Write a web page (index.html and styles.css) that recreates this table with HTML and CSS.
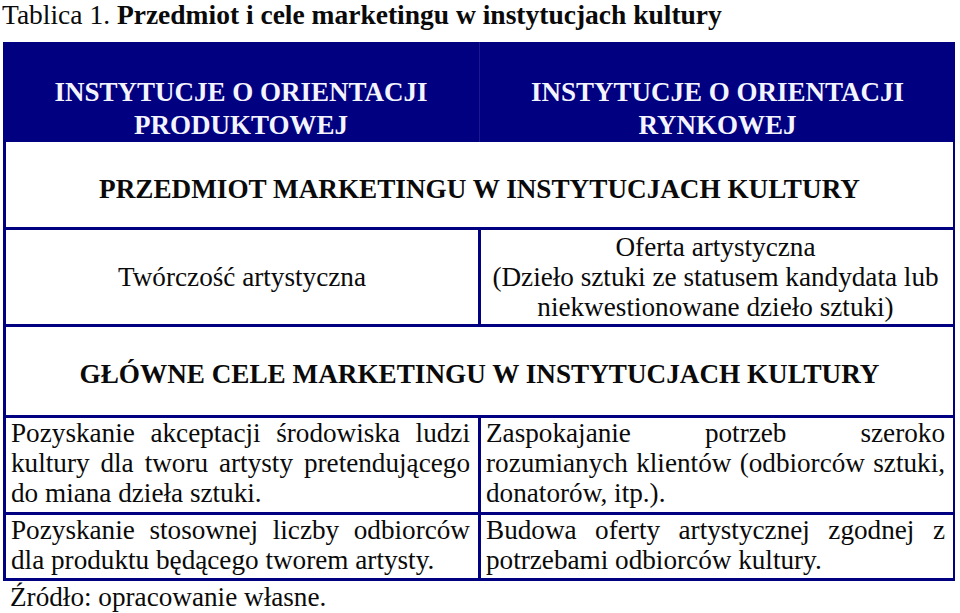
FILE: index.html
```html
<!DOCTYPE html>
<html lang="pl">
<head>
<meta charset="utf-8">
<title>Tablica 1</title>
<link rel="stylesheet" href="styles.css">
</head>
<body>
<div class="title">Tablica 1. <b>Przedmiot i cele marketingu w instytucjach kultury</b></div>
<div class="table">
  <div class="head">
    <div class="hcell">INSTYTUCJE O ORIENTACJI<br>PRODUKTOWEJ</div>
    <div class="hcell hcell-right">INSTYTUCJE O ORIENTACJI<br>RYNKOWEJ</div>
  </div>
  <div class="section section-subject">PRZEDMIOT MARKETINGU W INSTYTUCJACH KULTURY</div>
  <div class="pair pair-subject">
    <div class="cell center">Twórczość artystyczna</div>
    <div class="cell center cell-right">Oferta artystyczna<br>(Dzieło sztuki ze statusem kandydata lub<br>niekwestionowane dzieło sztuki)</div>
  </div>
  <div class="section section-goals">GŁÓWNE CELE MARKETINGU W INSTYTUCJACH KULTURY</div>
  <div class="pair pair-goals1">
    <div class="cell text">
      <span class="ln j">Pozyskanie akceptacji środowiska ludzi</span>
      <span class="ln j">kultury dla tworu artysty pretendującego</span>
      <span class="ln">do miana dzieła sztuki.</span>
    </div>
    <div class="cell text cell-right">
      <span class="ln j">Zaspokajanie potrzeb szeroko</span>
      <span class="ln j">rozumianych klientów (odbiorców sztuki,</span>
      <span class="ln">donatorów, itp.).</span>
    </div>
  </div>
  <div class="pair pair-goals2">
    <div class="cell text">
      <span class="ln j">Pozyskanie stosownej liczby odbiorców</span>
      <span class="ln">dla produktu będącego tworem artysty.</span>
    </div>
    <div class="cell text cell-right">
      <span class="ln j">Budowa oferty artystycznej zgodnej z</span>
      <span class="ln">potrzebami odbiorców kultury.</span>
    </div>
  </div>
</div>
<div class="source">Źródło: opracowanie własne.</div>
</body>
</html>
```

FILE: styles.css
```css
* { box-sizing: border-box; }
html, body { margin: 0; padding: 0; background: #fff; }
body {
  font-family: "Liberation Serif", "Times New Roman", serif;
  color: #0a0a0a;
  width: 960px;
  height: 613px;
  overflow: hidden;
}
.title {
  font-size: 27.5px;
  line-height: 30px;
  padding: 0 0 0 2px;
  height: 42px;
  white-space: nowrap;
}
.title b { font-weight: bold; }
.table {
  margin-left: 3px;
  width: 952px;
  border-left: 3px solid #000080;
  border-right: 2px solid #000080;
  border-bottom: 3px solid #000080;
}
.head {
  display: grid;
  grid-template-columns: 1fr 1fr;
  height: 100px;
  background: #000080;
  margin-left: -3px;
  margin-right: -2px;
}
.hcell {
  color: #f4f4ff;
  font-weight: bold;
  font-size: 27px;
  line-height: 33px;
  text-align: center;
  padding-top: 34px;
}
.hcell-right { border-left: 1px solid #1a1a8c; }
.section {
  font-weight: bold;
  font-size: 27.2px;
  text-align: center;
  display: flex;
  align-items: center;
  justify-content: center;
  white-space: nowrap;
}
.section-subject { height: 85px; padding-top: 10px; }
.section-goals { height: 91px; border-top: 3px solid #000080; padding-top: 6px; }
.pair {
  display: grid;
  grid-template-columns: 472px 472px;
  border-top: 3px solid #000080;
  font-size: 27.2px;
  line-height: 30px;
}
.pair-subject { height: 97px; }
.pair-goals1 { height: 97px; }
.pair-goals2 { height: 66px; }
.cell-right { border-left: 3px solid #000080; }
.center {
  display: flex;
  flex-direction: column;
  justify-content: center;
  align-items: center;
  text-align: center;
  white-space: nowrap;
}
.text { padding: 0 8px 0 5px; }
.text.cell-right { padding: 0 5px 0 5px; }
.ln { display: block; white-space: nowrap; }
.ln.j { text-align: justify; text-align-last: justify; white-space: normal; }
.source {
  font-size: 27.2px;
  line-height: 30px;
  padding-left: 10px;
  padding-top: 1px;
}
```
